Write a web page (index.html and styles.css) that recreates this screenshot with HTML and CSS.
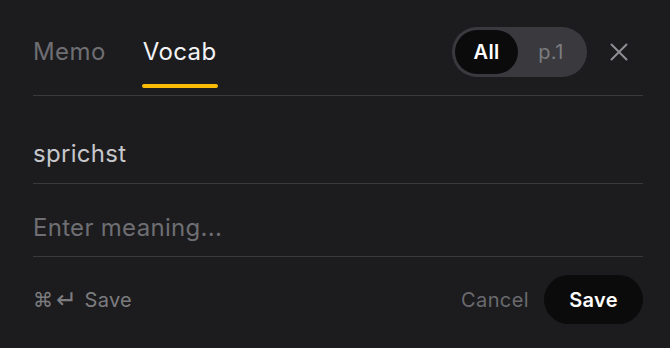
FILE: index.html
```html
<!DOCTYPE html>
<html lang="en">
<head>
<meta charset="utf-8">
<title>Vocab</title>
<link rel="stylesheet" href="styles.css">
</head>
<body>
<div class="panel">
  <header class="header">
    <nav class="tabs">
      <div class="tab">Memo</div>
      <div class="tab tab-active">Vocab<span class="tab-bar"></span></div>
    </nav>
    <div class="scope">
      <span class="scope-opt scope-on">All</span>
      <span class="scope-opt">p.1</span>
    </div>
    <button class="close" aria-label="Close">
      <svg width="18" height="18" viewBox="0 0 18 18"><path d="M1.5 1.5 L16.5 16.5 M16.5 1.5 L1.5 16.5" stroke="#8e8e93" stroke-width="2" stroke-linecap="round" fill="none"/></svg>
    </button>
  </header>
  <div class="field field-word"><input class="field-input word" type="text" value="sprichst"></div>
  <div class="field field-meaning"><input class="field-input" type="text" placeholder="Enter meaning..."></div>
  <footer class="footer">
    <span class="hint"><span class="key key-cmd">⌘</span><span class="key key-ret">↵</span>Save</span>
    <span class="cancel">Cancel</span>
    <button class="save">Save</button>
  </footer>
</div>
</body>
</html>
```
FILE: styles.css
```css
html, body {
  margin: 0;
  padding: 0;
  background: #1c1c1e;
}
body {
  font-family: Inter, "Noto Sans", "DejaVu Sans", sans-serif;
  color: #f2f2f7;
  width: 670px;
  height: 348px;
  overflow: hidden;
}
.panel {
  padding: 0 27px 0 33px;
}
.header {
  display: flex;
  align-items: flex-start;
  padding-top: 27px;
  height: 68px;
  border-bottom: 1px solid #3a3a3c;
}
.tabs {
  display: flex;
  gap: 37px;
  margin-top: 10px;
}
.tab {
  display: flex;
  flex-direction: column;
  font-size: 24px;
  line-height: 30px;
  letter-spacing: 0.4px;
  color: #6e6e73;
}
.tab-active {
  color: #f2f2f7;
}
.tab-bar {
  display: block;
  margin-top: 17px;
  height: 4px;
  margin-left: -1px;
  margin-right: -1px;
  border-radius: 2px;
  background: #fbbc05;
}
.scope {
  margin-left: auto;
  display: flex;
  align-items: center;
  height: 44px;
  padding: 3px;
  border-radius: 25px;
  background: #3a3a3e;
}
.scope-opt {
  display: flex;
  align-items: center;
  justify-content: center;
  height: 44px;
  width: 66px;
  font-size: 20px;
  letter-spacing: 0.3px;
  color: #7c7c80;
}
.scope-on {
  width: 63px;
  border-radius: 22px;
  background: #0b0b0c;
  color: #ffffff;
  font-weight: 600;
}
.close {
  margin: 16px 15px 0 23px;
  padding: 0;
  width: 18px;
  height: 18px;
  border: none;
  background: none;
  display: flex;
}
.field {
  border-bottom: 1px solid #3a3a3c;
}
.field-word {
  padding: 43px 0 14px;
}
.field-meaning {
  padding: 29px 0 13px;
}
.field-input {
  display: block;
  width: 100%;
  height: 30px;
  padding: 0;
  margin: 0;
  border: none;
  outline: none;
  background: transparent;
  font-family: inherit;
  font-size: 24px;
  line-height: 30px;
  letter-spacing: 0.3px;
  color: #c7c7cc;
}
.field-input::placeholder {
  color: #6e6e73;
}
.footer {
  display: flex;
  align-items: center;
  padding-top: 18px;
}
.hint {
  display: flex;
  align-items: center;
  font-size: 20px;
  line-height: 24px;
  letter-spacing: 0.3px;
  color: #7c7c80;
}
.key {
  font-family: "DejaVu Sans", sans-serif;
  line-height: 24px;
}
.key-cmd {
  font-size: 20px;
  margin-right: 3px;
}
.key-ret {
  font-size: 25px;
  margin-right: 7px;
}
.cancel {
  margin-left: auto;
  font-size: 20px;
  letter-spacing: 0.4px;
  color: #6a6a6e;
}
.save {
  margin-left: 15px;
  width: 99px;
  height: 49px;
  border: none;
  border-radius: 25px;
  background: #0b0b0c;
  color: #ffffff;
  font-family: inherit;
  font-size: 20px;
  font-weight: 600;
  letter-spacing: 0.3px;
  padding: 0;
}
```
